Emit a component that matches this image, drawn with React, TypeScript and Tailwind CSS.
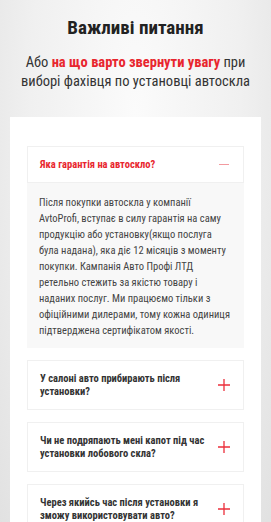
import React from 'react';

const faqs = [
  'У салоні авто прибирають після установки?',
  'Чи не подряпають мені капот під час установки лобового скла?',
  'Через якийсь час після установки я зможу використовувати авто?',
];

const Plus = () => (
  <svg width="12" height="12" viewBox="0 0 12 12" className="shrink-0">
    <path d="M6 0v12M0 6h12" stroke="#ec2f3b" strokeWidth="1.3" />
  </svg>
);

const App: React.FC = () => {
  return (
    <div
      className="min-h-[522px] bg-[radial-gradient(ellipse_at_50%_20%,#fbfbfb_0%,#f0f0f0_55%,#e0e0e0_100%)] pt-[14px]"
      style={{ fontFamily: '"Roboto Condensed", Roboto, sans-serif' }}
    >
      {/* Heading */}
      <h2 className="text-center text-[19px] font-bold leading-[28px] text-[#222]">Важливі питання</h2>
      <p className="mx-auto mt-[11px] w-[240px] text-center text-[14.5px] leading-[19px] text-[#333]">
        Або <span className="font-bold text-[#e8262e]">на що варто звернути увагу</span> при виборі фахівця по установці автоскла
      </p>

      {/* Card */}
      <div className="mx-[10px] mt-[26px] bg-white px-[17px] pt-[29px] pb-6">
        {/* Open item */}
        <div className="border border-[#f0f0f0]">
          <div className="flex items-center justify-between px-3 py-[11px]">
            <span className="text-[10.5px] font-bold leading-[13px] text-[#e8262e]">Яка гарантія на автоскло?</span>
            <span className="mr-[2px] h-[1.5px] w-[10px] bg-[#f39a9f]" />
          </div>
        </div>
        <div className="bg-[#f8f8f8] px-3 pt-3 pb-[9px] text-[10.5px] leading-[16px] text-[#444]">
          Після покупки автоскла у компанії AvtoProfi, вступає в силу гарантія на саму продукцію або установку(якщо послуга була надана), яка діє 12 місяців з моменту покупки. Кампанія Авто Профі ЛТД ретельно стежить за якістю товару і наданих послуг. Ми працюємо тільки з офіційними дилерами, тому кожна одиниця підтверджена сертифікатом якості.
        </div>

        {/* Closed items */}
        {faqs.map((q) => (
          <div key={q} className="mt-3 flex items-center border border-[#f0f0f0] px-3 py-[11px]">
            <span className="w-[168px] text-[10.5px] font-bold leading-[13px] text-[#333]">{q}</span>
            <span className="flex flex-1 justify-end pr-[1px]">
              <Plus />
            </span>
          </div>
        ))}
      </div>
    </div>
  );
};

export default App;
